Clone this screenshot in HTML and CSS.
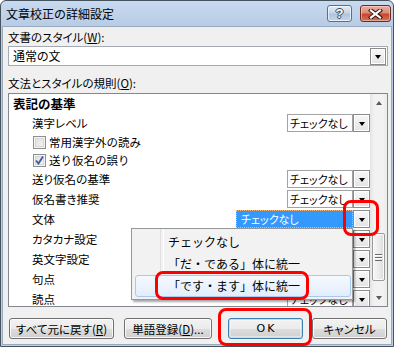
FILE: index.html
```html
<!DOCTYPE html>
<html lang="ja">
<head>
  <meta charset="UTF-8">
  <title>文章校正の詳細設定</title>
  <link rel="stylesheet" href="styles.css">
</head>
<body>
  <div class="window">
    <div class="titlebar">
      <span class="title">文章校正の詳細設定</span>
      <span class="cap-btn cap-help">?</span>
      <span class="cap-btn cap-close">
        <svg width="15" height="10" viewBox="0 0 15 10">
          <path d="M3 1.5 L12 8.5 M12 1.5 L3 8.5" stroke="#3a1a14" stroke-width="4.2" stroke-linecap="square" fill="none"/>
          <path d="M3 1.5 L12 8.5 M12 1.5 L3 8.5" stroke="#ffffff" stroke-width="2.2" stroke-linecap="square" fill="none"/>
        </svg>
      </span>
    </div>

    <div class="client">
      <div class="field-label">文書のスタイル(<u>W</u>):</div>
      <div class="style-combo">
        <span class="style-combo-text">通常の文</span>
        <span class="drop-btn"></span>
      </div>

      <div class="field-label rules-label">文法とスタイルの規則(<u>O</u>):</div>
      <div class="listbox">
        <div class="rows">
          <div class="row heading">表記の基準</div>
          <div class="row combo-row">
            <span class="name">漢字レベル</span>
            <span class="combo"><span class="combo-text">チェックなし</span><span class="drop-btn"></span></span>
          </div>
          <div class="row check-row">
            <span class="checkbox"></span>
            <span class="check-label">常用漢字外の読み</span>
          </div>
          <div class="row check-row">
            <span class="checkbox checked">
              <svg width="9" height="9" viewBox="0 0 9 9"><path d="M1 4.5 L3.5 7.5 L8 0.5" stroke="#3d5a9e" stroke-width="1.8" fill="none"/></svg>
            </span>
            <span class="check-label">送り仮名の誤り</span>
          </div>
          <div class="row combo-row">
            <span class="name">送り仮名の基準</span>
            <span class="combo"><span class="combo-text">チェックなし</span><span class="drop-btn"></span></span>
          </div>
          <div class="row combo-row">
            <span class="name">仮名書き推奨</span>
            <span class="combo"><span class="combo-text">チェックなし</span><span class="drop-btn"></span></span>
          </div>
          <div class="row combo-row">
            <span class="name">文体</span>
            <span class="combo combo-open"><span class="combo-text selected">チェックなし</span><span class="drop-btn"></span></span>
          </div>
          <!-- the next three fields sit under the open menu -->
          <div class="row combo-row">
            <span class="name">カタカナ設定</span>
            <span class="combo"><span class="combo-text"></span><span class="drop-btn"></span></span>
          </div>
          <div class="row combo-row">
            <span class="name">英文字設定</span>
            <span class="combo"><span class="combo-text"></span><span class="drop-btn"></span></span>
          </div>
          <div class="row combo-row">
            <span class="name">句点</span>
            <span class="combo"><span class="combo-text"></span><span class="drop-btn"></span></span>
          </div>
          <div class="row combo-row">
            <span class="name">読点</span>
            <span class="combo"><span class="combo-text">チェックなし</span><span class="drop-btn"></span></span>
          </div>
        </div>

        <div class="vscroll">
          <div class="sb-arrow sb-up"></div>
          <div class="sb-track"><div class="sb-thumb"><span class="grip"></span></div></div>
          <div class="sb-arrow sb-down"></div>
        </div>

        <div class="popup">
          <div class="menu-item">チェックなし</div>
          <div class="menu-item">「だ・である」体に統一</div>
          <div class="menu-item hot">「です・ます」体に統一</div>
        </div>
      </div>

      <div class="buttons">
        <span class="btn btn-reset">すべて元に戻す(<u>R</u>)</span>
        <span class="btn btn-dict">単語登録(<u>D</u>)...</span>
        <span class="btn btn-ok">OK</span>
        <span class="btn btn-cancel">キャンセル</span>
      </div>
    </div>
  </div>

  <div class="callout callout-drop"></div>
  <div class="callout callout-item"></div>
  <div class="callout callout-ok"></div>
</body>
</html>
```

FILE: styles.css
```css
* {
  box-sizing: border-box;
}
body {
  margin: 0;
  width: 396px;
  height: 347px;
  position: relative;
  overflow: hidden;
  background: #ffffff;
  font-family: "Noto Sans CJK JP", "Noto Sans", sans-serif;
  font-size: 11.5px;
  color: #000000;
  font-feature-settings: "palt";
}
u {
  text-decoration-thickness: 1px;
  text-underline-offset: 1px;
}

/* window frame */
.window {
  width: 394px;
  height: 347px;
  border: 1px solid #47525f;
  border-radius: 6px 6px 0 0;
  background: linear-gradient(#c8daef, #b7cbe4 26px, #bccfe6);
  display: flex;
  flex-direction: column;
}
.titlebar {
  height: 25px;
  flex: none;
  display: flex;
  align-items: center;
  padding: 0 2px 0 5px;
}
.title {
  flex: 1;
  font-size: 12px;
  line-height: 14px;
  padding-top: 1px;
  font-feature-settings: normal;
}
.cap-btn {
  height: 17px;
  border-radius: 3px;
  display: flex;
  align-items: center;
  justify-content: center;
}
.cap-help {
  width: 25px;
  margin-right: 8px;
  border: 1px solid #5d6f88;
  background: linear-gradient(#e3ecf7, #c5d5e9 45%, #afc4df 55%, #c4d6ec);
  box-shadow: inset 0 0 0 1px rgba(255, 255, 255, 0.6);
  font-family: "Liberation Sans", sans-serif;
  font-weight: bold;
  font-size: 13px;
  line-height: 15px;
  color: #ffffff;
  text-shadow: 1px 0 #33435a, -1px 0 #33435a, 0 1px #33435a, 0 -1px #33435a;
}
.cap-close {
  width: 31px;
  border: 1px solid #6e2b22;
  background: linear-gradient(#eab0a3, #dc8a78 45%, #c7472f 55%, #d5735a);
  box-shadow: inset 0 0 0 1px rgba(255, 220, 210, 0.5);
}

.client {
  flex: 1;
  margin: 0 1px 1px 1px;
  border: 1px solid #9aaabd;
  background: #f0f0f0;
  padding: 3px 0 0 5px;
}
.field-label {
  line-height: 14px;
  height: 14px;
}
.rules-label {
  margin-top: 10px;
}

/* combos */
.style-combo {
  margin-top: 2px;
  width: 380px;
  height: 20px;
  border: 1px solid #a5a9b1;
  background: #ffffff;
  display: flex;
  align-items: center;
  padding: 1px;
}
.style-combo-text {
  flex: 1;
  padding-left: 3px;
  line-height: 16px;
  font-size: 12px;
}
.drop-btn {
  width: 16px;
  height: 16px;
  border: 1px solid #8b8b8b;
  background: linear-gradient(#f7f7f7, #e4e4e4);
  box-shadow: inset 0 0 0 1px #ffffff;
  display: flex;
  align-items: center;
  justify-content: center;
}
.drop-btn::after {
  content: "";
  border-style: solid;
  border-width: 4px 3.5px 0;
  border-color: #000000 transparent transparent;
  margin-top: 1px;
}
.style-combo .drop-btn {
  height: 17px;
}

/* rule list */
.listbox {
  position: relative;
  margin-top: 3px;
  width: 380px;
  height: 214px;
  border: 1px solid #828790;
  background: #ffffff;
  display: flex;
  overflow: hidden;
}
.rows {
  flex: 1;
}
.row {
  display: flex;
  align-items: center;
}
.heading {
  height: 19px;
  padding-left: 4px;
  font-weight: bold;
  font-size: 12.5px;
  font-feature-settings: normal;
}
.combo-row {
  height: 20px;
  padding-left: 23px;
}
.check-row {
  height: 18px;
  padding-left: 24px;
}
.checkbox {
  width: 13px;
  height: 13px;
  border: 1px solid #8e8f8f;
  background: #ffffff;
  box-shadow: inset 0 0 0 1px #f4f4f4, inset 0 0 0 2px #d6d6d6;
  background-image: linear-gradient(135deg, #dcdcdc, #f6f6f6);
  background-clip: content-box;
  padding: 2px;
  display: flex;
  align-items: center;
  justify-content: center;
}
.checkbox.checked {
  padding: 0;
  background-clip: border-box;
}
.check-label {
  margin-left: 3px;
  font-feature-settings: normal;
}
.combo {
  margin-left: auto;
  width: 83px;
  height: 18px;
  display: flex;
}
.combo-open {
  width: 134px;
}
.combo-text {
  flex: 1;
  border: 1px solid #a3a3a3;
  padding-left: 2px;
  line-height: 16px;
  font-size: 11px;
  white-space: nowrap;
  overflow: hidden;
}
.combo-text.selected {
  border: 1px dotted #f3b87a;
  background: #3399ff;
  color: #ffffff;
  padding-left: 4px;
}
.combo .drop-btn {
  width: 17px;
  height: 18px;
}

/* scrollbar */
.vscroll {
  width: 17px;
  display: flex;
  flex-direction: column;
  background: linear-gradient(90deg, #e4e4e4, #f2f2f2 25%, #f2f2f2 75%, #ebebeb);
}
.sb-arrow {
  height: 17px;
  display: flex;
  align-items: center;
  justify-content: center;
}
.sb-up::after,
.sb-down::after {
  content: "";
  border-style: solid;
  border-color: transparent;
}
.sb-up::after {
  border-width: 0 3.5px 4px;
  border-bottom-color: #5a5a5a;
}
.sb-down::after {
  border-width: 4px 3.5px 0;
  border-top-color: #5a5a5a;
}
.sb-track {
  flex: 1;
}
.sb-thumb {
  margin: 122px 0 0 2px;
  width: 13px;
  height: 48px;
  border: 1px solid #9a9a9a;
  border-radius: 2px;
  background: linear-gradient(90deg, #f7f7f7, #ececec 50%, #dcdcdc);
  box-shadow: inset 0 0 0 1px #fbfbfb;
  display: flex;
  align-items: center;
  justify-content: center;
}
.grip {
  width: 7px;
  height: 7px;
  background: repeating-linear-gradient(#6a6a6a 0 1px, #ffffff 1px 2px, transparent 2px 3px);
}

/* dropdown menu */
.popup {
  position: absolute;
  left: 122px;
  top: 134px;
  width: 222px;
  height: 72px;
  border: 1px solid #979797;
  background: #f2f2f2;
  box-shadow: 2px 2px 2px rgba(0, 0, 0, 0.35);
  padding: 2px 1px 2px 3px;
  font-size: 12px;
  font-feature-settings: normal;
}
.popup::before {
  content: "";
  position: absolute;
  left: 28px;
  top: 0;
  bottom: 0;
  width: 2px;
  border-left: 1px solid #e0e0e0;
  border-right: 1px solid #ffffff;
}
.menu-item {
  position: relative;
  height: 22px;
  line-height: 20px;
  padding-left: 32px;
  border: 1px solid transparent;
  border-radius: 3px;
}
.menu-item.hot {
  border-color: #a9c9ef;
  background: linear-gradient(#f5f9ff, #e2edfb);
}

/* buttons */
.buttons {
  margin-top: 11px;
  padding-left: 1px;
  display: flex;
}
.btn {
  height: 21px;
  border: 1px solid #707070;
  border-radius: 3px;
  background: linear-gradient(#f2f2f2, #ebebeb 50%, #dddddd 50%, #cfcfcf);
  box-shadow: inset 0 0 0 1px rgba(255, 255, 255, 0.8);
  display: flex;
  align-items: center;
  justify-content: center;
  line-height: 14px;
}
.btn-reset {
  width: 105px;
}
.btn-dict {
  width: 88px;
  margin-left: 10px;
}
.btn-ok {
  width: 75px;
  margin-left: 16px;
  border-color: #3c7fb1;
  box-shadow: inset 0 0 0 1px #b9e3f9, inset 0 0 0 2px rgba(255, 255, 255, 0.4);
  font-family: "DejaVu Sans", sans-serif;
  font-size: 11px;
  letter-spacing: 2px;
  padding-left: 2px;
}
.btn-cancel {
  width: 75px;
  margin-left: 9px;
}

/* red annotation marks */
.callout {
  position: absolute;
  border: 3px solid #ff0000;
  border-radius: 8px;
}
.callout-drop {
  left: 343px;
  top: 200px;
  width: 36px;
  height: 36px;
}
.callout-item {
  left: 155px;
  top: 271px;
  width: 154px;
  height: 29px;
}
.callout-ok {
  left: 218px;
  top: 308px;
  width: 94px;
  height: 38px;
}
```
